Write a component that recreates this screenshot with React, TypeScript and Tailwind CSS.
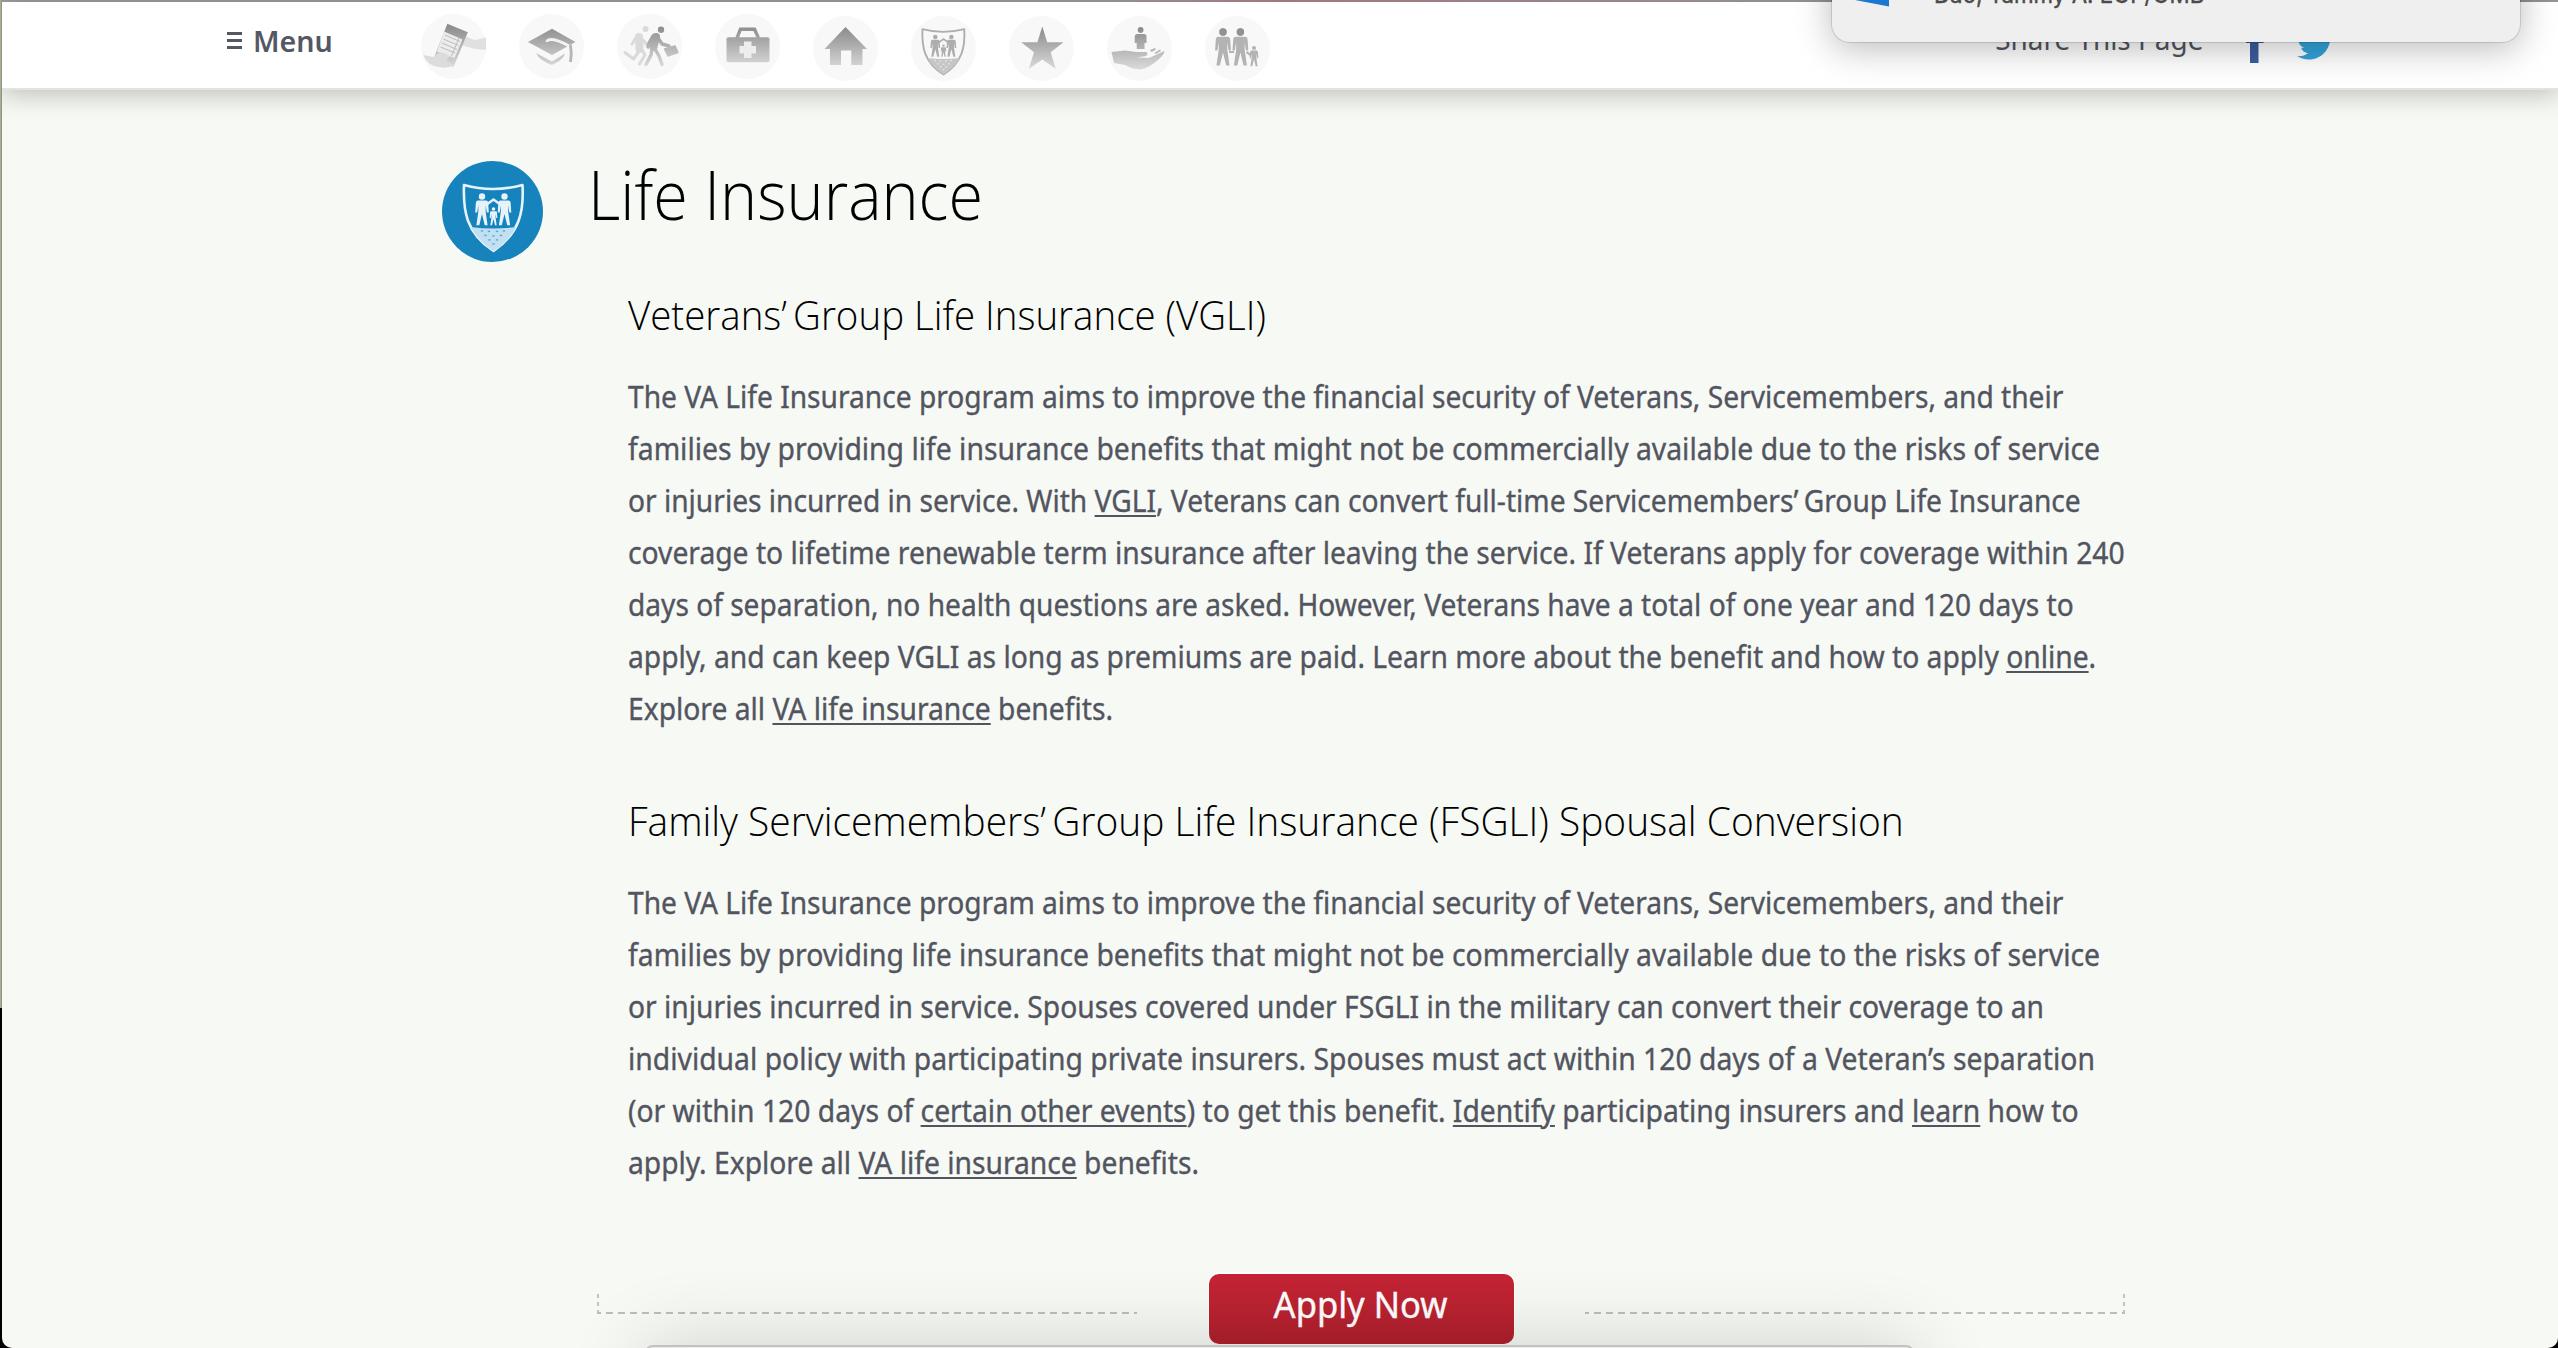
import type { ReactNode } from "react";
import { FaTwitter } from "react-icons/fa";

const PERSON =
  "M0-4a4 4 0 1 1 0 8a4 4 0 1 1 0-8ZM-5 5H5Q7.5 5 7.7 8L8.5 20H6L4.6 11V19L7 36H3.4L0 22L-3.4 36H-7L-4.6 19V11L-6 20H-8.5L-7.7 8Q-7.5 5-5 5Z";

function Person({ x, y, s }: { x: number; y: number; s: number }) {
  return <path d={PERSON} transform={`translate(${x} ${y}) scale(${s})`} />;
}

function ShieldArt({ line, fill, dots }: { line: string; fill: string; dots: string }) {
  return (
    <g>
      <path
        d="M22 24Q51 32 80.500 24C82 50 78 72 51.500 90C24 72 21 50 22 24Z"
        fill="none"
        stroke={line}
        strokeWidth="2.6"
        strokeLinejoin="round"
      />
      <path d="M29 66Q51 69 74 66Q67 80 51.500 90Q36 80 29 66Z" fill={fill} />
      <g fill={dots}>
        {[
          [40, 70], [47, 70.5], [55, 70.5], [62, 70],
          [43.5, 74.5], [51.5, 75], [59, 74.5],
          [47.5, 79], [55, 79], [51.5, 83],
        ].map(([x, y]) => (
          <rect key={`${x}-${y}`} x={x - 1.2} y={y - 0.8} width="2.4" height="1.4" />
        ))}
      </g>
      <g fill={line}>
        <Person x={40} y={35.5} s={0.8} />
        <Person x={62.5} y={35.5} s={0.8} />
        <Person x={51.5} y={48} s={0.45} />
      </g>
      <path d="M44 44L51.500 38.500L59 44" fill="none" stroke={line} strokeWidth="2.4" />
    </g>
  );
}

function NavIcon({ id, children, low }: { id: string; children: (paint: string) => ReactNode; low?: boolean }) {
  return (
    <a href="#" className={low ? "block h-[65px] w-[65px] translate-y-[2px]" : "block h-[65px] w-[65px]"}>
      <svg viewBox="0 0 65 65" className="block h-full w-full">
        <defs>
          <linearGradient id={id} x1="0" y1="12" x2="0" y2="53" gradientUnits="userSpaceOnUse">
            <stop offset="0" stopColor="#8c8c8c" />
            <stop offset="1" stopColor="#dadada" />
          </linearGradient>
        </defs>
        <circle cx="32.5" cy="32.5" r="32.5" fill="#f8f8f8" />
        {children(`url(#${id})`)}
      </svg>
    </a>
  );
}

function NavIcons() {
  return (
    <nav className="flex gap-[33px]">
      <NavIcon id="n1">
        {(p) => (
          <g>
            <path d="M43 22L54 26L65 23.500V36L54 35L40 31Z" fill="#e0e0e0" />
            <path d="M26.400 9.700L46.800 18.300L32.500 53L12 46Z" fill={p} />
            <path d="M23 17.500L41.500 25.500L33.500 44L16 37.500Z" fill="#ececec" />
            <g stroke="#bcbcbc" strokeWidth="1" fill="none">
              <path d="M24 21L39 27.500M22.500 25L37.500 31.500M21 29L36 35.500M19.500 33L34 39M38 24L30.500 42" />
            </g>
            <path d="M2 41Q8 42 12 43L18 38.500Q22 37 29 42L25 47L33 51Q26 55 18 53Q7 52 2 41Z" fill="#dcdcdc" />
          </g>
        )}
      </NavIcon>
      <NavIcon id="n2">
        {(p) => (
          <g>
            <path d="M9 28L33 14.700L56.500 28L33 41Z" fill={p} />
            <path d="M28 28Q28 25.500 33 25.500Q38 25.500 50 32" fill="none" stroke="#f2f2f2" strokeWidth="3" />
            <path d="M51.500 31Q53 40 51.500 48" fill="none" stroke="#b5b5b5" strokeWidth="2.8" />
            <path d="M17 39L33 47.500L46 39.500Q44 46 33 51Q21 47 17 39Z" fill={p} />
          </g>
        )}
      </NavIcon>
      <NavIcon id="n3">
        {(p) => (
          <g fill="none" strokeLinejoin="round" strokeLinecap="round">
            <g stroke="#dadada" strokeWidth="3">
              <circle cx="28.5" cy="15" r="3" fill="#dadada" stroke="none" />
              <path d="M22 23L22.500 35" strokeWidth="8" />
              <path d="M20 22L15 30M23 36L16.500 45L8 38.500M25 36L28 41L22.500 50M26 26L30 31" />
            </g>
            <g stroke={p} strokeWidth="3.4">
              <circle cx="44" cy="15.7" r="3.2" fill={p} stroke="none" />
              <path d="M39 23L36.500 33" strokeWidth="8" />
              <path d="M36 22L32 29L31 33M41 24L45 30L52 32M35 35L34 41L29 50.500M38 35L42 42L45 50.500" />
              <path d="M47.500 35L58 32L61 38.500L51 42Z" fill={p} strokeWidth="1.5" />
            </g>
          </g>
        )}
      </NavIcon>
      <NavIcon id="n4">
        {(p) => (
          <g>
            <path d="M22 24L25.500 15.200H39.500L43.500 24" fill="none" stroke={p} strokeWidth="3.4" />
            <rect x="11.5" y="23.3" width="43" height="25" rx="2" fill={p} />
            <path d="M29 27.500H36.500V32H41V39.500H36.500V44H29V39.500H24.500V32H29Z" fill="#ededed" />
          </g>
        )}
      </NavIcon>
      <NavIcon id="n5" low>
        {(p) => <path d="M32.500 11L54 33H49.500V49H38.300V34.500H28V49H17V33H11.500Z" fill={p} />}
      </NavIcon>
      <NavIcon id="n6" low>
        {() => (
          <g transform="translate(-4.300 -3.500) scale(.715 .69)">
            <ShieldArt line="#adadad" fill="#c6c6c6" dots="#f2f2f2" />
          </g>
        )}
      </NavIcon>
      <NavIcon id="n7" low>
        {(p) => (
          <path d="M33.300 10.500L38.200 26.200H54.500L41.700 36.300L46.800 53L33.300 43.500L19.800 53L25 36.300L12.200 26.200H28.400Z" fill={p} />
        )}
      </NavIcon>
      <NavIcon id="n8" low>
        {(p) => (
          <g fill={p}>
            <circle cx="33.6" cy="14" r="2.9" />
            <path d="M30 18H37Q39.500 18 39.500 20.500V27H37.500V33H29.700V27H27.700V20.500Q27.700 18 30 18Z" />
            <path d="M4.500 36L18 34.500L29 36H39Q42 37.500 39 40L30 41.500L42 42L57.500 35Q58 39 46 48Q38 53 33 53.500Q25 53 18 49L7 47Z" />
            <path d="M43 34L48 32L49 33.500L44.500 36ZM47 37L53 33.500L54 35L49 38Z" />
          </g>
        )}
      </NavIcon>
      <NavIcon id="n9" low>
        {() => (
          <g fill="#b3b3b3">
            <Person x={18} y={16} s={0.93} />
            <Person x={35.4} y={16} s={0.93} />
            <Person x={49} y={32} s={0.51} />
            <path d="M24 35H29V37H24ZM42 35L46 38L45 40L41 37Z" />
            <g fill="#919191">
              <circle cx="18" cy="16" r="3.7" />
              <circle cx="35.4" cy="16" r="3.7" />
            </g>
          </g>
        )}
      </NavIcon>
    </nav>
  );
}

function Line({ fit, children }: { fit: string; children: ReactNode }) {
  return <span className={`block w-fit origin-left whitespace-nowrap ${fit}`}>{children}</span>;
}

function A({ children }: { children: ReactNode }) {
  return (
    <a href="#" className="underline decoration-2 underline-offset-[3px]">
      {children}
    </a>
  );
}

const H2 = "font-['Open_Sans',sans-serif] text-[41px] leading-[52px] font-light text-black";
const P =
  "mt-[31px] font-['Noto_Sans',sans-serif] text-[30px] leading-[52px] text-[#52555f] [-webkit-text-stroke:0.35px_#52555f]";
const DASH_H =
  "h-[2px] w-full bg-[repeating-linear-gradient(to_right,#bcbeba_0_4px,transparent_4px_9px,#bcbeba_9px_12px)]";
const DASH_V = "h-[18px] w-[2px] bg-[repeating-linear-gradient(to_bottom,#c2c4c0_0_4px,transparent_4px_8px)]";

export default function App() {
  return (
    <div className="relative flex h-[1348px] w-[2558px] overflow-hidden bg-black">
      <div className="flex w-[2px] shrink-0 flex-col">
        <div className="h-[1008px] border-r border-[#8d9a6a] bg-[#a9a9a9]" />
      </div>
      <div className="flex min-w-0 flex-1 flex-col overflow-hidden rounded-b-[10px] bg-[#f7f9f4]">
        <div className="h-[2px] shrink-0 bg-linear-to-r from-[#9c9c9c] from-43% via-[#ae8088] via-50% to-[#9c9c9c] to-71%" />
        <header className="relative z-10 flex h-[88px] shrink-0 items-start border-b-2 border-[#e2e3e2] bg-white shadow-[0_4px_24px_rgba(60,65,50,0.32)]">
          <button className="ml-[225px] flex h-[65px] items-start">
            <span className="mt-[30px] flex w-[15px] flex-col gap-[4px]">
              <i className="h-[3px] bg-[#555863]" />
              <i className="h-[3px] bg-[#555863]" />
              <i className="h-[3px] bg-[#555863]" />
            </span>
            <span className="ml-[11px] mt-[19px] block origin-left scale-x-[0.985] font-['Noto_Sans',sans-serif] text-[29px] leading-[40px] font-semibold text-[#555863]">
              Menu
            </span>
          </button>
          <div className="ml-[87px] mt-[12px]">
            <NavIcons />
          </div>
          <div className="ml-auto mr-[224px] flex items-start">
            <span className="mt-[17px] block origin-right scale-x-[0.962] whitespace-nowrap font-['Noto_Sans',sans-serif] text-[29px] leading-[40px] text-[#52555f]">
              Share This Page
            </span>
            <svg viewBox="0 0 20 40" className="ml-[42px] mt-[21px] block h-[40px] w-[20px]">
              <path d="M5 40V20H1V14H5V9Q5 1 13 1H18V7H16Q13.500 7 13.500 10V14H19L18.500 20H13.500V40Z" fill="#3a5c9f" />
            </svg>
            <FaTwitter className="ml-[32px] mt-[24px] h-[37px] w-[37px] text-[#33a3d9]" />
          </div>
        </header>

        <main className="flex pl-[440px]">
          <svg viewBox="0 0 101 101" className="mt-[71px] block h-[101px] w-[101px] shrink-0">
            <circle cx="50.5" cy="50.5" r="50.5" fill="#1683bd" />
            <ShieldArt line="#e6f3fa" fill="#c2e0f1" dots="#5aa9d3" />
          </svg>
          <div className="ml-[45px] mt-[59px]">
            <h1 className="font-['Open_Sans',sans-serif] text-[68px] leading-[90px] font-light text-black">
              <Line fit="scale-x-[0.925]">Life Insurance</Line>
            </h1>
            <section className="ml-[40px] mt-[49px]">
              <h2 className={H2}>
                <Line fit="scale-x-[0.938]">
                  Veterans’<span className="-ml-[4px]"> Group Life Insurance (VGLI)</span>
                </Line>
              </h2>
              <p className={P}>
                <Line fit="scale-x-[0.938]">The VA Life Insurance program aims to improve the financial security of Veterans, Servicemembers, and their</Line>
                <Line fit="scale-x-[0.944]">families by providing life insurance benefits that might not be commercially available due to the risks of service</Line>
                <Line fit="scale-x-[0.938]">or injuries incurred in service. With <A>VGLI</A>, Veterans can convert full-time Servicemembers’<span className="-ml-[2px]"> Group</span> Life Insurance</Line>
                <Line fit="scale-x-[0.941]">coverage to lifetime renewable term insurance after leaving the service. If Veterans apply for coverage within 240</Line>
                <Line fit="scale-x-[0.937]">days of separation, no health questions are asked. However, Veterans have a total of one year and 120 days to</Line>
                <Line fit="scale-x-[0.941]">apply, and can keep VGLI as long as premiums are paid. Learn more about the benefit and how to apply <A>online</A>.</Line>
                <Line fit="scale-x-[0.941]">Explore all <A>VA life insurance</A> benefits.</Line>
              </p>
            </section>
            <section className="ml-[40px] mt-[59px]">
              <h2 className={H2}>
                <Line fit="scale-x-[0.949]">
                  Family Servicemembers’<span className="-ml-[4px]"> Group Life Insurance (FSGLI) Spousal Conversion</span>
                </Line>
              </h2>
              <p className={P}>
                <Line fit="scale-x-[0.938]">The VA Life Insurance program aims to improve the financial security of Veterans, Servicemembers, and their</Line>
                <Line fit="scale-x-[0.944]">families by providing life insurance benefits that might not be commercially available due to the risks of service</Line>
                <Line fit="scale-x-[0.9405]">or injuries incurred in service. Spouses covered under FSGLI in the military can convert their coverage to an</Line>
                <Line fit="scale-x-[0.9435]">individual policy with participating private insurers. Spouses must act within 120 days of a Veteran’s separation</Line>
                <Line fit="scale-x-[0.9425]">(or within 120 days of <A>certain other events</A>) to get this benefit. <A>Identify</A> participating insurers and <A>learn</A> how to</Line>
                <Line fit="scale-x-[0.941]">apply. Explore all <A>VA life insurance</A> benefits.</Line>
              </p>
            </section>
            <div className="ml-[9px] mt-[85px] flex w-[1528px] items-start justify-between">
              <div className="mt-[20px] w-[540px]">
                <div className={DASH_V} />
                <div className={DASH_H} />
              </div>
              <button className="h-[70px] w-[305px] rounded-[10px] bg-linear-to-b from-[#c42434] to-[#b0202e] shadow-[0_-1px_0_1px_#ffffff]">
                <span className="mx-auto -mt-[8px] block w-fit scale-x-[0.961] whitespace-nowrap font-['Noto_Sans',sans-serif] text-[36px] leading-[48px] text-white [-webkit-text-stroke:0.4px_#ffffff]">
                  Apply Now
                </span>
              </button>
              <div className="mt-[20px] flex w-[540px] flex-col items-end">
                <div className={DASH_V} />
                <div className={DASH_H} />
              </div>
            </div>
          </div>
        </main>
      </div>

      <div className="absolute left-[1832px] top-[-60px] z-20 h-[102px] w-[688px] rounded-[18px] bg-[#efefef] shadow-[0_0_0_1px_rgba(0,0,0,0.12),0_6px_36px_rgba(0,0,0,0.28)]">
        <svg viewBox="0 0 34 10" className="absolute left-[23px] top-[60px] h-[10px] w-[34px]">
          <path d="M0 0H34V6.500Z" fill="#1a78cf" />
        </svg>
        <span className="absolute left-[102px] top-[39px] origin-left scale-x-[0.93] whitespace-nowrap font-['Inter',sans-serif] text-[24px] leading-[32px] text-[#4a4a4a] [-webkit-text-stroke:0.4px_#4a4a4a]">
          Dao, Tammy A. EOP/OMB
        </span>
      </div>
      <div className="absolute left-[645px] top-[1345px] h-[400px] w-[1269px] rounded-[8px] border-2 border-[#c2c3be] bg-[#ececec] shadow-[0_0_80px_rgba(0,0,0,0.16)]" />
    </div>
  );
}
